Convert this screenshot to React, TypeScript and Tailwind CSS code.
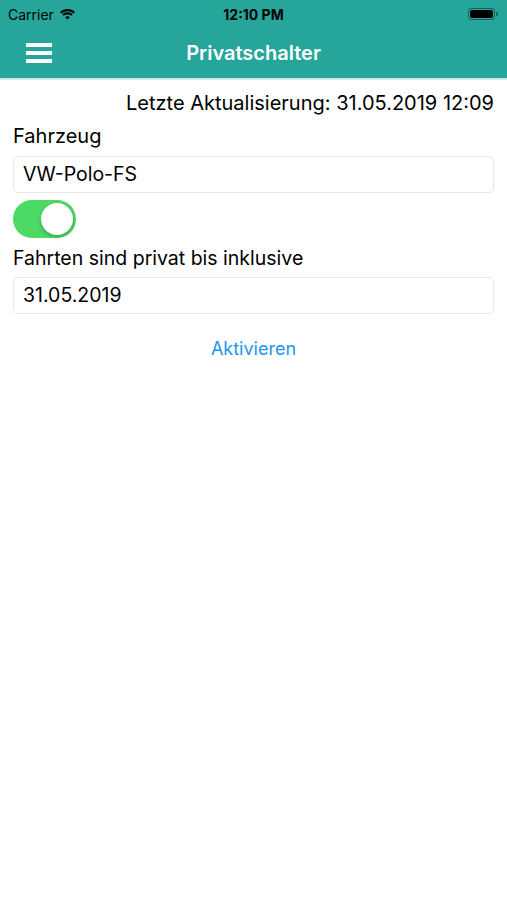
import React, { useState } from 'react';

function StatusBar() {
  return (
    <div className="relative flex h-[28px] items-center px-2 text-[14px] text-black">
      <div className="flex items-center gap-[5px]">
        <span>Carrier</span>
        <svg width="17" height="12" viewBox="0 0 17 12">
          <path d="M8.5 3.2c2.3 0 4.4.9 6 2.4l1.5-1.5C14 2.2 11.4 1 8.5 1S3 2.2 1 4.1l1.5 1.5c1.6-1.5 3.7-2.4 6-2.4z" fill="#000" />
          <path d="M8.5 6.4c1.4 0 2.7.5 3.7 1.4l1.5-1.5C12.3 5 10.5 4.2 8.5 4.2S4.7 5 3.3 6.3l1.5 1.5c1-.9 2.3-1.4 3.7-1.4z" fill="#000" />
          <path d="M8.5 11.5l2.3-2.3c-.6-.6-1.4-.9-2.3-.9s-1.7.3-2.3.9z" fill="#000" />
        </svg>
      </div>
      <div className="absolute left-0 right-0 text-center font-bold">12:10 PM</div>
      <div className="ml-auto flex items-center pr-[1px]">
        <div className="h-[12px] w-[27px] rounded-[3px] border border-black/40 p-[1px]">
          <div className="h-full w-full rounded-[2px] bg-black" />
        </div>
        <div className="ml-[1px] h-[4px] w-[2px] rounded-r-sm bg-black/40" />
      </div>
    </div>
  );
}

function Field({ value }: { value: string }) {
  return (
    <div className="flex h-[37px] items-center rounded-[5px] border border-[#e6e6e6] px-[9px] text-[19.5px] text-black">
      {value}
    </div>
  );
}

export default function App() {
  const [on, setOn] = useState(true);

  return (
    <div className="min-h-[900px] bg-white font-['Inter',sans-serif]">
      <div className="border-b-2 border-[#c9ece8] bg-[#26a69a]">
        <StatusBar />
        <div className="relative flex h-[50px] items-center">
          <button className="ml-[26px] flex h-[20px] w-[26px] flex-col justify-between">
            <span className="h-[4px] w-full bg-white" />
            <span className="h-[4px] w-full bg-white" />
            <span className="h-[4px] w-full bg-white" />
          </button>
          <div className="absolute left-0 right-0 text-center text-[20px] font-semibold text-white">
            Privatschalter
          </div>
        </div>
      </div>

      <div className="px-[13px] pt-[11px]">
        <div className="text-right text-[20px] leading-[24px] text-black">
          Letzte Aktualisierung: 31.05.2019 12:09
        </div>
        <div className="mt-[9px] text-[20px] leading-[24px] text-black">Fahrzeug</div>
        <div className="mt-[8px]">
          <Field value="VW-Polo-FS" />
        </div>
        <button
          onClick={() => setOn(!on)}
          className={`mt-[7px] flex h-[38px] w-[63px] items-center rounded-full p-[3px] ${on ? 'justify-end bg-[#4cd964]' : 'justify-start bg-[#e5e5e5]'}`}
        >
          <span className="h-[32px] w-[32px] rounded-full bg-white shadow-[0_2px_4px_rgba(0,0,0,0.25)]" />
        </button>
        <div className="mt-[8px] text-[19.5px] leading-[24px] text-black">Fahrten sind privat bis inklusive</div>
        <div className="mt-[7px]">
          <Field value="31.05.2019" />
        </div>
        <div className="mt-[21px] text-center text-[18px] text-[#2196f3]">Aktivieren</div>
      </div>
    </div>
  );
}
